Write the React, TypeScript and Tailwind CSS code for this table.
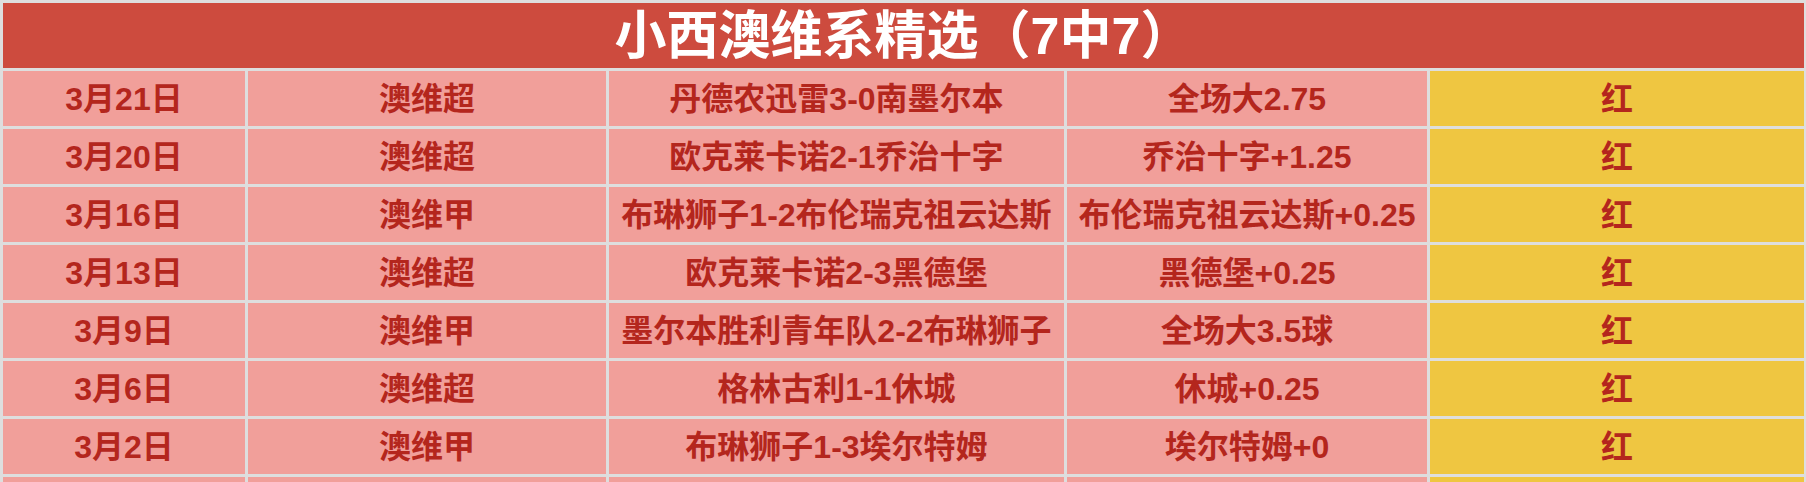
const rows = [
  { date: "3月21日", league: "澳维超", match: "丹德农迅雷3-0南墨尔本", pick: "全场大2.75", result: "红" },
  { date: "3月20日", league: "澳维超", match: "欧克莱卡诺2-1乔治十字", pick: "乔治十字+1.25", result: "红" },
  { date: "3月16日", league: "澳维甲", match: "布琳狮子1-2布伦瑞克祖云达斯", pick: "布伦瑞克祖云达斯+0.25", result: "红" },
  { date: "3月13日", league: "澳维超", match: "欧克莱卡诺2-3黑德堡", pick: "黑德堡+0.25", result: "红" },
  { date: "3月9日", league: "澳维甲", match: "墨尔本胜利青年队2-2布琳狮子", pick: "全场大3.5球", result: "红" },
  { date: "3月6日", league: "澳维超", match: "格林古利1-1休城", pick: "休城+0.25", result: "红" },
  { date: "3月2日", league: "澳维甲", match: "布琳狮子1-3埃尔特姆", pick: "埃尔特姆+0", result: "红" },
  { date: "", league: "", match: "", pick: "", result: "" },
]

const cell =
  "h-[55px] flex items-center justify-center bg-[#f19f9a] text-[#b4261d] text-[32px] font-bold whitespace-nowrap"

export default function App() {
  return (
    <div
      className="w-[1806px] h-[482px] overflow-hidden bg-[#dedede] pl-[3px] pr-[2px] pt-[3px]"
      style={{ fontFamily: '"Liberation Sans", "Noto Sans CJK SC", sans-serif' }}
    >
      <div className="grid grid-cols-[242px_358px_455px_360px_1fr] gap-[3px]">
        {/* Title */}
        <div className="col-span-5 h-[65px] flex items-center justify-center bg-[#cd4b3e] text-white text-[52px] font-semibold leading-none">
          小西澳维系精选（7中7）
        </div>

        {rows.map((r, i) => (
          <div key={i} className="contents">
            <div className={cell}>{r.date}</div>
            <div className={cell}>{r.league}</div>
            <div className={cell}>{r.match}</div>
            <div className={cell}>{r.pick}</div>
            <div className={cell + " !bg-[#efc641]"}>{r.result}</div>
          </div>
        ))}
      </div>
    </div>
  )
}
